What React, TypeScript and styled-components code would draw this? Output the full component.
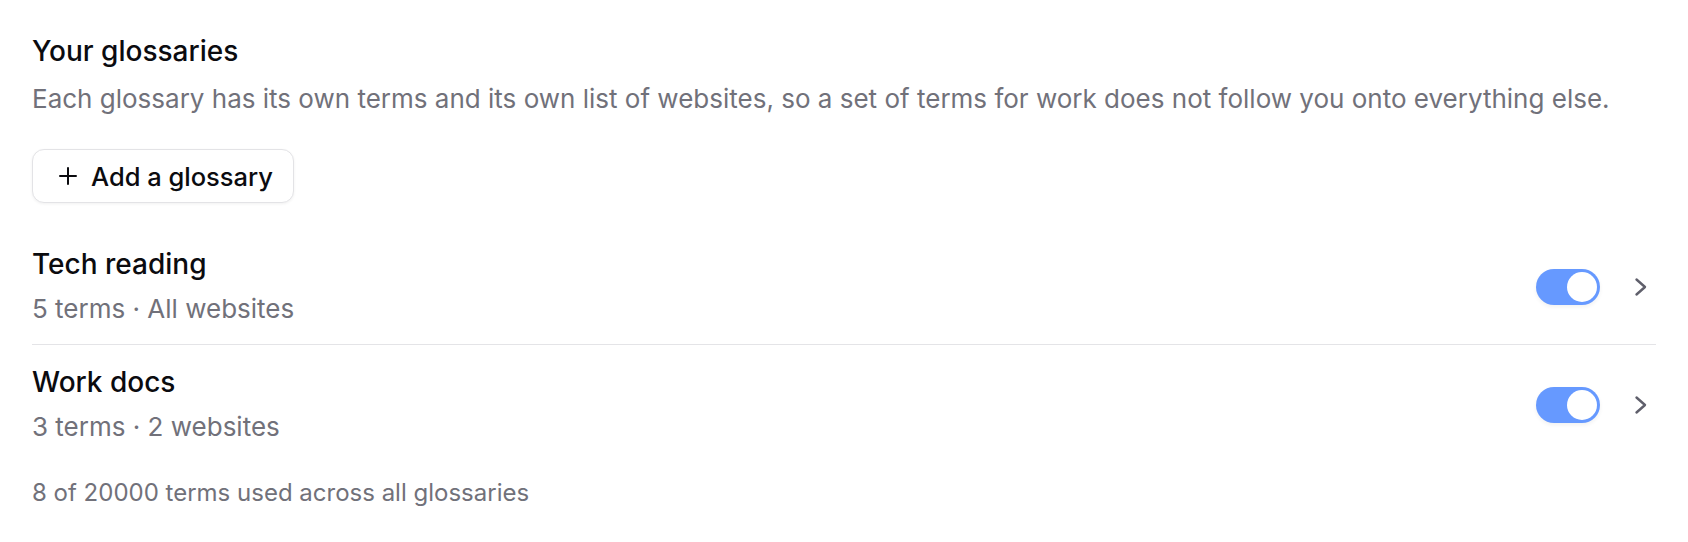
import React, { useState } from "react";
import styled, { createGlobalStyle } from "styled-components";

const GlobalStyle = createGlobalStyle`
  html, body { margin: 0; padding: 0; background: #ffffff; }
  body { font-family: Inter, "Noto Sans", "Liberation Sans", sans-serif; color: #0b0b0f; -webkit-font-smoothing: antialiased; }
  * { box-sizing: border-box; }
`;

const Page = styled.main`
  padding: 33px 32px 0 32px;
  display: flex;
  flex-direction: column;
`;

const Title = styled.h2`
  margin: 0;
  font-size: 28px;
  line-height: 36px;
  font-weight: 500;
  color: #0b0b0f;
`;

const Description = styled.p`
  margin: 12px 0 0 0;
  font-size: 26px;
  line-height: 36px;
  color: #71717a;
`;

const AddButton = styled.button`
  align-self: flex-start;
  margin-top: 32px;
  height: 54px;
  padding: 0 20px 0 25.5px;
  display: inline-flex;
  align-items: center;
  gap: 14.5px;
  background: #ffffff;
  border: 1.5px solid #e3e3e6;
  border-radius: 12px;
  box-shadow: 0 1px 3px rgba(0, 0, 0, 0.06);
  font-family: inherit;
  font-size: 25.5px;
  font-weight: 500;
  color: #0b0b0f;
  cursor: pointer;
`;

const List = styled.ul`
  list-style: none;
  margin: 24px 0 0 0;
  padding: 0;
`;

const Row = styled.li<{ $divider?: boolean }>`
  display: flex;
  align-items: center;
  padding: 19px 0 17px 0;
  border-bottom: ${(p) => (p.$divider ? "1.5px solid #e4e4e7" : "none")};
`;

const RowText = styled.div`
  flex: 1;
  display: flex;
  flex-direction: column;
  gap: 9px;
`;

const RowTitle = styled.div`
  font-size: 28px;
  line-height: 36px;
  font-weight: 500;
  color: #0b0b0f;
`;

const RowMeta = styled.div`
  font-size: 26px;
  line-height: 36px;
  color: #71717a;
`;

const Controls = styled.div`
  display: flex;
  align-items: center;
  gap: 33px;
  padding-right: 7px;
`;

const Toggle = styled.button<{ $on: boolean }>`
  width: 64px;
  height: 36px;
  padding: 3px;
  border: none;
  border-radius: 18px;
  background: ${(p) => (p.$on ? "#6699ff" : "#d4d4d8")};
  display: flex;
  justify-content: ${(p) => (p.$on ? "flex-end" : "flex-start")};
  box-shadow: 0 2px 4px rgba(0, 0, 0, 0.06);
  cursor: pointer;
`;

const Knob = styled.span`
  width: 30px;
  height: 30px;
  border-radius: 50%;
  background: #ffffff;
`;

const Chevron = styled.svg`
  width: 16px;
  height: 22px;
  display: block;
`;

const Footer = styled.p`
  margin: 15px 0 0 0;
  font-size: 24px;
  line-height: 32px;
  color: #71717a;
`;

const PlusIcon = () => (
  <svg width="18" height="18" viewBox="0 0 18 18" aria-hidden="true">
    <path d="M1 9h16M9 1v16" stroke="#0b0b0f" strokeWidth="2" strokeLinecap="round" fill="none" />
  </svg>
);

const ChevronIcon = () => (
  <Chevron viewBox="0 0 16 22" aria-hidden="true">
    <polyline points="3.5,3.5 12,11 3.5,18.5" fill="none" stroke="#5f5f6b" strokeWidth="2.4" strokeLinecap="round" strokeLinejoin="round" />
  </Chevron>
);

const glossaries = [
  { name: "Tech reading", meta: "5 terms · All websites", on: true },
  { name: "Work docs", meta: "3 terms · 2 websites", on: true },
];

export default function App() {
  const [items, setItems] = useState(glossaries);
  return (
    <>
      <GlobalStyle />
      <Page>
        <Title>Your glossaries</Title>
        <Description>
          Each glossary has its own terms and its own list of websites, so a set of terms for work does not follow you onto everything else.
        </Description>
        <AddButton type="button">
          <PlusIcon />
          Add a glossary
        </AddButton>
        <List>
          {items.map((g, i) => (
            <Row key={g.name} $divider={i < items.length - 1}>
              <RowText>
                <RowTitle>{g.name}</RowTitle>
                <RowMeta>{g.meta}</RowMeta>
              </RowText>
              <Controls>
                <Toggle
                  type="button"
                  $on={g.on}
                  aria-pressed={g.on}
                  onClick={() => setItems((prev) => prev.map((x, j) => (j === i ? { ...x, on: !x.on } : x)))}
                >
                  <Knob />
                </Toggle>
                <ChevronIcon />
              </Controls>
            </Row>
          ))}
        </List>
        <Footer>8 of 20000 terms used across all glossaries</Footer>
      </Page>
    </>
  );
}
